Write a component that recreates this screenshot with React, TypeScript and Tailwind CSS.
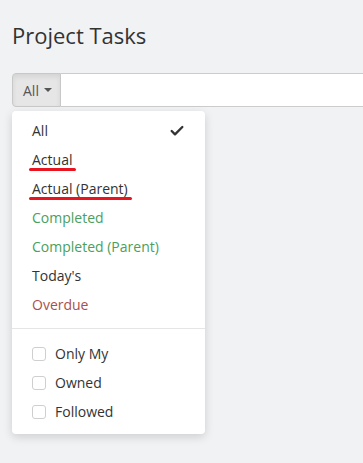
import { Check } from 'lucide-react'

const items = [
  { label: 'All', color: 'text-[#333]', checked: true },
  { label: 'Actual', color: 'text-[#333]', mark: true },
  { label: 'Actual (Parent)', color: 'text-[#333]', mark: true },
  { label: 'Completed', color: 'text-[#4aa05c]' },
  { label: 'Completed (Parent)', color: 'text-[#4aa05c]' },
  { label: "Today's", color: 'text-[#333]' },
  { label: 'Overdue', color: 'text-[#a9504e]' },
]

const filters = ['Only My', 'Owned', 'Followed']

export default function App() {
  return (
    <div className="h-[463px] w-[363px] overflow-hidden bg-[#f1f2f4] font-['Open_Sans',sans-serif] text-[#333]">
      <h1 className="px-3 pt-[20px] text-[22px] leading-[30px] text-[#333]">Project Tasks</h1>

      <div className="relative ml-3 mt-[23px] flex w-[400px]">
        <button className="flex h-[34px] w-[49px] items-center gap-[5px] rounded-l-[4px] border border-[#c8c8c8] bg-[#e6e6e6] pl-[10px] text-[14px] text-[#555] shadow-[inset_0_3px_5px_rgba(0,0,0,0.08)]">
          All
          <span className="h-0 w-0 border-x-[4px] border-t-[4px] border-x-transparent border-t-[#555]" />
        </button>
        <div className="h-[34px] flex-1 border-y border-r border-[#ccc] bg-white" />

        {/* dropdown menu */}
        <div className="absolute left-0 top-[38px] w-[193px] rounded-[4px] bg-white pb-[8px] pt-[5px] shadow-[0_3px_10px_rgba(0,0,0,0.15)]">
          {items.map((item) => (
            <div key={item.label} className={`flex h-[29px] items-center justify-between pl-5 pr-5 text-[14px] ${item.color}`}>
              <span className="relative">
                {item.label}
                {item.mark && (
                  <span className="absolute -left-[3px] -right-[4px] top-[19px] h-[3px] rounded-full bg-[#e8141f]" />
                )}
              </span>
              {item.checked && <Check className="h-[16px] w-[16px] text-[#333]" strokeWidth={3.5} />}
            </div>
          ))}

          <div className="mb-[10px] mt-[9px] h-px bg-[#e5e5e5]" />

          {filters.map((f) => (
            <div key={f} className="flex h-[29px] items-center gap-[9px] pl-5 text-[14px] text-[#333]">
              <span className="h-[14px] w-[14px] rounded-[3px] border border-[#cfcfcf] bg-white" />
              {f}
            </div>
          ))}
        </div>
      </div>
    </div>
  )
}
